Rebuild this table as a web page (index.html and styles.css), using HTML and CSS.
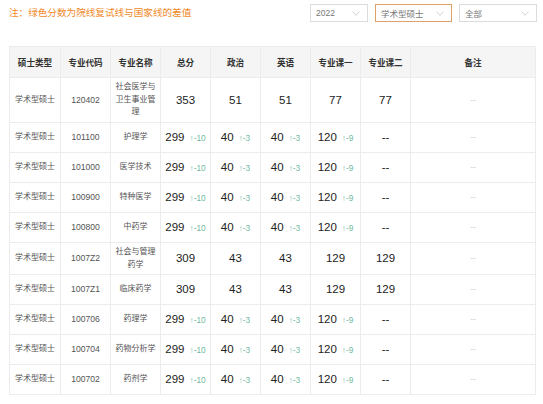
FILE: index.html
```html
<!DOCTYPE html>
<html lang="zh">
<head>
<meta charset="utf-8">
<link rel="stylesheet" href="styles.css">
</head>
<body>
<div class="page">
  <div class="topbar">
    <div class="note">注：绿色分数为院线复试线与国家线的差值</div>
    <div class="filters">
      <div class="select s-year"><span>2022</span><svg class="chev" width="8" height="5" viewBox="0 0 8 5"><polyline points="0.5,0.5 4,4.3 7.5,0.5" fill="none" stroke="#c8c8c8" stroke-width="0.8"/></svg></div>
      <div class="select s-type active"><span>学术型硕士</span><svg class="chev" width="8" height="5" viewBox="0 0 8 5"><polyline points="0.5,0.5 4,4.3 7.5,0.5" fill="none" stroke="#c8c8c8" stroke-width="0.8"/></svg></div>
      <div class="select s-all"><span>全部</span><svg class="chev" width="8" height="5" viewBox="0 0 8 5"><polyline points="0.5,0.5 4,4.3 7.5,0.5" fill="none" stroke="#c8c8c8" stroke-width="0.8"/></svg></div>
    </div>
  </div>
  <table class="scores">
    <colgroup>
      <col class="c50"><col class="c50"><col class="c50"><col class="c50"><col class="c50"><col class="c50"><col class="c50"><col class="c50"><col>
    </colgroup>
    <thead>
      <tr><th>硕士类型</th><th>专业代码</th><th>专业名称</th><th>总分</th><th>政治</th><th>英语</th><th>专业课一</th><th>专业课二</th><th>备注</th></tr>
    </thead>
    <tbody>
      <tr class="tall"><td>学术型硕士</td><td class="code">120402</td><td class="name">社会医学与卫生事业管理</td><td class="num">353</td><td class="num">51</td><td class="num">51</td><td class="num">77</td><td class="num">77</td><td class="rem">--</td></tr>
      <tr><td>学术型硕士</td><td class="code">101100</td><td class="name">护理学</td><td class="num">299<span class="d">↑-10</span></td><td class="num">40<span class="d">↑-3</span></td><td class="num">40<span class="d">↑-3</span></td><td class="num">120<span class="d">↑-9</span></td><td class="num">--</td><td class="rem">--</td></tr>
      <tr><td>学术型硕士</td><td class="code">101000</td><td class="name">医学技术</td><td class="num">299<span class="d">↑-10</span></td><td class="num">40<span class="d">↑-3</span></td><td class="num">40<span class="d">↑-3</span></td><td class="num">120<span class="d">↑-9</span></td><td class="num">--</td><td class="rem">--</td></tr>
      <tr><td>学术型硕士</td><td class="code">100900</td><td class="name">特种医学</td><td class="num">299<span class="d">↑-10</span></td><td class="num">40<span class="d">↑-3</span></td><td class="num">40<span class="d">↑-3</span></td><td class="num">120<span class="d">↑-9</span></td><td class="num">--</td><td class="rem">--</td></tr>
      <tr><td>学术型硕士</td><td class="code">100800</td><td class="name">中药学</td><td class="num">299<span class="d">↑-10</span></td><td class="num">40<span class="d">↑-3</span></td><td class="num">40<span class="d">↑-3</span></td><td class="num">120<span class="d">↑-9</span></td><td class="num">--</td><td class="rem">--</td></tr>
      <tr class="mid"><td>学术型硕士</td><td class="code">1007Z2</td><td class="name">社会与管理药学</td><td class="num">309</td><td class="num">43</td><td class="num">43</td><td class="num">129</td><td class="num">129</td><td class="rem">--</td></tr>
      <tr><td>学术型硕士</td><td class="code">1007Z1</td><td class="name">临床药学</td><td class="num">309</td><td class="num">43</td><td class="num">43</td><td class="num">129</td><td class="num">129</td><td class="rem">--</td></tr>
      <tr><td>学术型硕士</td><td class="code">100706</td><td class="name">药理学</td><td class="num">299<span class="d">↑-10</span></td><td class="num">40<span class="d">↑-3</span></td><td class="num">40<span class="d">↑-3</span></td><td class="num">120<span class="d">↑-9</span></td><td class="num">--</td><td class="rem">--</td></tr>
      <tr><td>学术型硕士</td><td class="code">100704</td><td class="name">药物分析学</td><td class="num">299<span class="d">↑-10</span></td><td class="num">40<span class="d">↑-3</span></td><td class="num">40<span class="d">↑-3</span></td><td class="num">120<span class="d">↑-9</span></td><td class="num">--</td><td class="rem">--</td></tr>
      <tr><td>学术型硕士</td><td class="code">100702</td><td class="name">药剂学</td><td class="num">299<span class="d">↑-10</span></td><td class="num">40<span class="d">↑-3</span></td><td class="num">40<span class="d">↑-3</span></td><td class="num">120<span class="d">↑-9</span></td><td class="num">--</td><td class="rem">--</td></tr>
    </tbody>
  </table>
</div>
</body>
</html>
```

FILE: styles.css
```css
* { box-sizing: border-box; }
html, body { margin: 0; padding: 0; background: #fff; }
body {
  font-family: "Liberation Sans", "Noto Sans CJK SC", sans-serif;
  color: #555;
}
.page {
  padding: 4px 6px 0 9px;
}
.topbar {
  display: flex;
  justify-content: space-between;
  align-items: flex-start;
  height: 42px;
}
.note {
  font-size: 9.6px;
  color: #f08a2a;
  line-height: 18px;
}
.filters {
  display: flex;
  gap: 7px;
}
.select {
  height: 18px;
  border: 1px solid #dcdcdc;
  display: flex;
  align-items: center;
  justify-content: space-between;
  padding: 0 7px 0 5px;
  font-size: 8.5px;
  color: #777;
  background: #fff;
}
.select.active { border-color: #e0a06a; }
.s-year { width: 58px; }
.s-type { width: 77px; }
.s-all { width: 78px; }
.chev { display: block; }

.scores {
  width: 527px;
  border-collapse: collapse;
  table-layout: fixed;
}
.c50 { width: 50px; }
.scores col:first-child { width: 51px; }
.scores th, .scores td {
  border: 1px solid #ececec;
  text-align: center;
  vertical-align: middle;
  padding: 0 4px;
}
.scores th {
  background: #f5f5f5;
  height: 31px;
  font-size: 8.6px;
  font-weight: bold;
  color: #333;
}
.scores td {
  height: 30px;
  font-size: 8px;
  line-height: 12.5px;
  color: #555;
}
.scores tr.tall td { height: 45px; }
.scores tr.mid td { height: 32px; }
.scores td.code { font-size: 8.6px; color: #555; }
.scores td.name { padding: 0 2px; color: #555; }
.scores td.num {
  font-size: 11.5px;
  color: #222;
  white-space: nowrap;
  padding: 0 1px;
}
.scores td.num .d {
  font-size: 8.3px;
  color: #6fb9a2;
  margin-left: 5px;
}
.scores td.rem {
  color: #c4c4c4;
  font-size: 7.5px;
}
```
